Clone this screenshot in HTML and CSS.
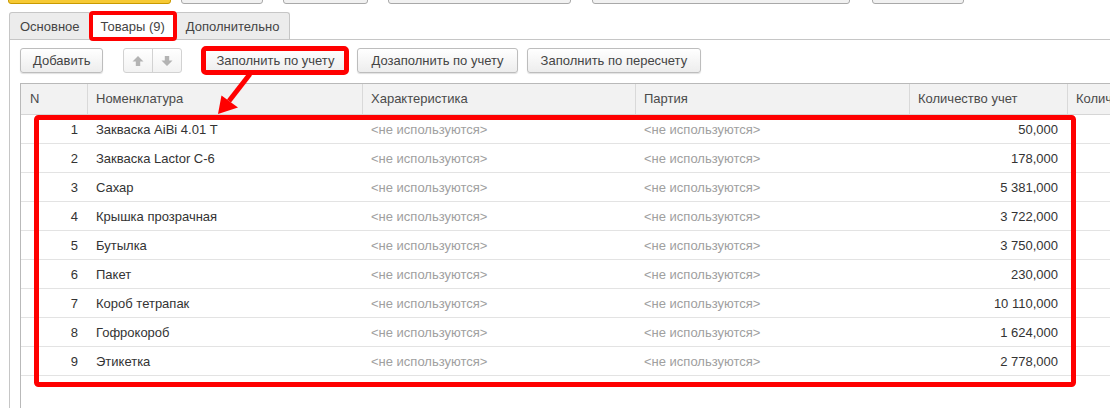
FILE: index.html
```html
<!DOCTYPE html>
<html lang="ru">
<head>
<meta charset="utf-8">
<title>Товары</title>
<link rel="stylesheet" href="styles.css">
</head>
<body>
<div class="page">
  <div class="top">
    <span class="tb tb-yellow w1"></span>
    <span class="tb w2 g10"></span>
    <span class="tb w3 g20"></span>
    <span class="tb w4 g20"></span>
    <span class="tb w5 g21"></span>
    <span class="tb w6 g22"></span>
  </div>

  <div class="tabs">
    <div class="tab">Основное</div>
    <div class="tab active">Товары (9)</div>
    <div class="tab">Дополнительно</div>
  </div>

  <div class="panel">
    <div class="toolbar">
      <button class="btn">Добавить</button>
      <div class="btn-group">
        <span class="gbtn"><svg width="12" height="12" viewBox="0 0 12 12"><path d="M6 1 L11.5 6.5 H8.2 V11 H3.8 V6.5 H0.5 Z" fill="#b3b3b3"/></svg></span>
        <span class="gbtn"><svg width="12" height="12" viewBox="0 0 12 12"><path d="M6 11 L11.5 5.5 H8.2 V1 H3.8 V5.5 H0.5 Z" fill="#b3b3b3"/></svg></span>
      </div>
      <button class="btn btn-mark">Заполнить по учету</button>
      <button class="btn btn-g11">Дозаполнить по учету</button>
      <button class="btn btn-g9">Заполнить по пересчету</button>
    </div>

    <div class="grid">
      <div class="row head">
        <div class="c c-n">N</div>
        <div class="c">Номенклатура</div>
        <div class="c">Характеристика</div>
        <div class="c">Партия</div>
        <div class="c">Количество учет</div>
        <div class="c">Количество пересчет</div>
      </div>
      <div class="row"><div class="c c-n">1</div><div class="c">Закваска AiBi 4.01 Т</div><div class="c muted">&lt;не используются&gt;</div><div class="c muted">&lt;не используются&gt;</div><div class="c num">50,000</div><div class="c"></div></div>
      <div class="row"><div class="c c-n">2</div><div class="c">Закваска Lactor C-6</div><div class="c muted">&lt;не используются&gt;</div><div class="c muted">&lt;не используются&gt;</div><div class="c num">178,000</div><div class="c"></div></div>
      <div class="row"><div class="c c-n">3</div><div class="c">Сахар</div><div class="c muted">&lt;не используются&gt;</div><div class="c muted">&lt;не используются&gt;</div><div class="c num">5 381,000</div><div class="c"></div></div>
      <div class="row"><div class="c c-n">4</div><div class="c">Крышка прозрачная</div><div class="c muted">&lt;не используются&gt;</div><div class="c muted">&lt;не используются&gt;</div><div class="c num">3 722,000</div><div class="c"></div></div>
      <div class="row"><div class="c c-n">5</div><div class="c">Бутылка</div><div class="c muted">&lt;не используются&gt;</div><div class="c muted">&lt;не используются&gt;</div><div class="c num">3 750,000</div><div class="c"></div></div>
      <div class="row"><div class="c c-n">6</div><div class="c">Пакет</div><div class="c muted">&lt;не используются&gt;</div><div class="c muted">&lt;не используются&gt;</div><div class="c num">230,000</div><div class="c"></div></div>
      <div class="row"><div class="c c-n">7</div><div class="c">Короб тетрапак</div><div class="c muted">&lt;не используются&gt;</div><div class="c muted">&lt;не используются&gt;</div><div class="c num">10 110,000</div><div class="c"></div></div>
      <div class="row"><div class="c c-n">8</div><div class="c">Гофрокороб</div><div class="c muted">&lt;не используются&gt;</div><div class="c muted">&lt;не используются&gt;</div><div class="c num">1 624,000</div><div class="c"></div></div>
      <div class="row"><div class="c c-n">9</div><div class="c">Этикетка</div><div class="c muted">&lt;не используются&gt;</div><div class="c muted">&lt;не используются&gt;</div><div class="c num">2 778,000</div><div class="c"></div></div>
    </div>
  </div>

  <svg class="overlay" width="1110" height="408" viewBox="0 0 1110 408">
    <rect x="36.5" y="117.5" width="1037" height="267" rx="2" fill="none" stroke="#ff0000" stroke-width="5"/>
    <line x1="250" y1="74" x2="229" y2="101" stroke="#ff0000" stroke-width="5"/>
    <polygon points="218,114 221.5,95.5 238,107.5" fill="#ff0000"/>
  </svg>
</div>
</body>
</html>
```

FILE: styles.css
```css
html, body {
  margin: 0;
  padding: 0;
  background: #ffffff;
}

body {
  font-family: "Liberation Sans", Arial, sans-serif;
  font-size: 13px;
  color: #333333;
  overflow: hidden;
}

.page {
  position: relative;
  width: 1110px;
  height: 408px;
  overflow: hidden;
}

/* remnants of the top command bar */
.top {
  display: flex;
  align-items: flex-end;
  height: 4px;
  overflow: hidden;
  padding-left: 8px;
}

.tb {
  flex: none;
  height: 22px;
  box-sizing: border-box;
  border: 1px solid #a9a9a9;
  border-radius: 0 0 3px 3px;
  background: #f1f1f1;
}

.tb-yellow {
  background: #f6c934;
  border-color: #c99a00;
}

.w1 { width: 163px; }
.w2 { width: 82px; }
.w3 { width: 85px; }
.w4 { width: 183px; }
.w5 { width: 258px; }
.w6 { width: 92px; }
.g10 { margin-left: 10px; }
.g20 { margin-left: 20px; }
.g21 { margin-left: 21px; }
.g22 { margin-left: 22px; }

/* tabs */
.tabs {
  display: flex;
  align-items: flex-end;
  margin: 8px 0 0 9px;
  border-bottom: 1px solid #c6c6c6;
}

.tab {
  height: 27px;
  line-height: 27px;
  padding: 0 10px;
  box-sizing: border-box;
  background: #ececec;
  border: 1px solid #c6c6c6;
  border-bottom: none;
  border-radius: 3px 3px 0 0;
  color: #444444;
  margin-right: -1px;
  white-space: nowrap;
}

.tab.active {
  background: #ffffff;
  position: relative;
  margin-bottom: -1px;
  height: 28px;
  padding: 0 10px;
  outline: 4px solid #ff0000;
  outline-offset: -3px;
  border-radius: 3px;
}

/* panel */
.panel {
  margin-left: 9px;
  border-left: 1px solid #c6c6c6;
  padding: 8px 0 0 10px;
  height: 400px;
}

.toolbar {
  display: flex;
  align-items: center;
  height: 25px;
}

.btn {
  height: 25px;
  padding: 0 12px;
  font-family: "Liberation Sans", Arial, sans-serif;
  font-size: 13px;
  color: #444444;
  background: linear-gradient(#ffffff, #ededed);
  border: 1px solid #bdbdbd;
  border-radius: 3px;
  box-shadow: 0 1px 1px rgba(0, 0, 0, 0.12);
  flex: none;
  white-space: nowrap;
}

.btn-mark {
  margin-left: 21px;
  outline: 5px solid #ff0000;
  outline-offset: -3px;
}

.btn-g11 { margin-left: 10px; padding: 0 13px; }
.btn-g9 { margin-left: 9px; padding: 0 13px; }

.btn-group {
  display: flex;
  margin-left: 20px;
  height: 25px;
  box-sizing: border-box;
  border: 1px solid #d2d2d2;
  border-radius: 3px;
  background: linear-gradient(#ffffff, #f2f2f2);
}

.gbtn {
  width: 28px;
  display: flex;
  align-items: center;
  justify-content: center;
}

.gbtn + .gbtn {
  border-left: 1px solid #d2d2d2;
}

/* table */
.grid {
  margin-top: 10px;
  border-top: 1px solid #b9b9b9;
  border-left: 1px solid #b9b9b9;
  width: 1250px;
  height: 330px;
}

.row {
  display: grid;
  grid-template-columns: 66px 275px 273px 274px 158px 204px;
  height: 29px;
  box-sizing: border-box;
  border-bottom: 1px solid #e3e3e3;
  align-items: center;
}

.row.head {
  height: 31px;
  background: #f2f2f2;
  border-bottom: 1px solid #d6d6d6;
  color: #4a4a4a;
}

.c {
  padding: 0 9px;
  white-space: nowrap;
  overflow: hidden;
}

.row .c-n {
  text-align: right;
}

.row.head .c {
  height: 30px;
  line-height: 30px;
  border-left: 1px solid #d9d9d9;
  padding-left: 8px;
}

.row.head .c-n {
  border-left: none;
  text-align: left;
  padding-left: 9px;
}

.muted {
  color: #a0a0a0;
}

.num {
  text-align: right;
}

.overlay {
  position: absolute;
  left: 0;
  top: 0;
  pointer-events: none;
}
```
